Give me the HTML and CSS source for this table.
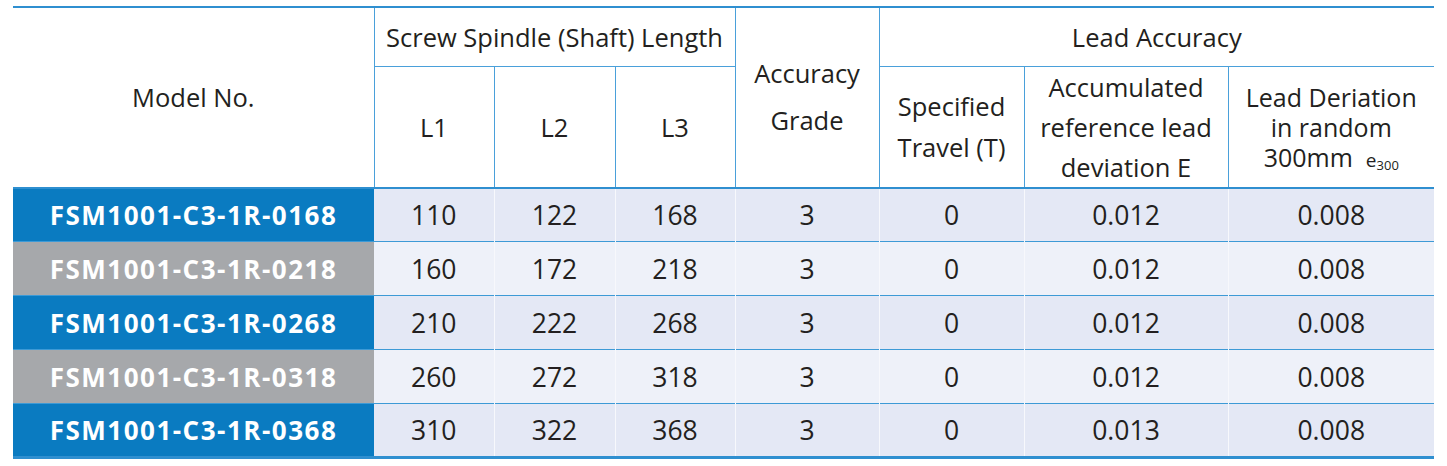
FILE: index.html
```html
<!DOCTYPE html>
<html>
<head>
<meta charset="utf-8">
<link rel="stylesheet" href="styles.css">
</head>
<body>
<table class="spec">
  <colgroup>
    <col class="c-model"><col class="c-l"><col class="c-l2"><col class="c-l">
    <col class="c-grade"><col class="c-travel"><col class="c-acc"><col class="c-dev">
  </colgroup>
  <thead>
    <tr class="h1">
      <th rowspan="2" class="first">Model No.</th>
      <th colspan="3">Screw Spindle (Shaft) Length</th>
      <th rowspan="2" class="grade">Accuracy<br>Grade</th>
      <th colspan="3">Lead Accuracy</th>
    </tr>
    <tr class="h2">
      <th>L1</th><th>L2</th><th>L3</th>
      <th class="travel">Specified<br>Travel (T)</th>
      <th class="acc">Accumulated<br>reference lead<br>deviation E</th>
      <th class="dev"><span class="ln">Lead Deriation</span><span class="ln">in random</span><span class="ln">300mm&nbsp; <span class="e">e<sub>300</sub></span></span></th>
    </tr>
  </thead>
  <tbody>
    <tr class="odd"><th class="blue">FSM1001-C3-1R-0168</th><td>110</td><td>122</td><td>168</td><td>3</td><td>0</td><td>0.012</td><td>0.008</td></tr>
    <tr class="even"><th class="grey">FSM1001-C3-1R-0218</th><td>160</td><td>172</td><td>218</td><td>3</td><td>0</td><td>0.012</td><td>0.008</td></tr>
    <tr class="odd"><th class="blue">FSM1001-C3-1R-0268</th><td>210</td><td>222</td><td>268</td><td>3</td><td>0</td><td>0.012</td><td>0.008</td></tr>
    <tr class="even"><th class="grey">FSM1001-C3-1R-0318</th><td>260</td><td>272</td><td>318</td><td>3</td><td>0</td><td>0.012</td><td>0.008</td></tr>
    <tr class="odd last"><th class="blue">FSM1001-C3-1R-0368</th><td>310</td><td>322</td><td>368</td><td>3</td><td>0</td><td>0.013</td><td>0.008</td></tr>
  </tbody>
</table>
</body>
</html>
```
FILE: styles.css
```css
html, body {
  margin: 0;
  padding: 0;
  background: #ffffff;
}
body {
  padding: 6px 0 0 13px;
  font-family: "Open Sans", "Liberation Sans", sans-serif;
  color: #231f20;
}
.spec {
  border-collapse: collapse;
  table-layout: fixed;
  width: 1421px;
  border-top: 2px solid #2f8fd0;
  border-bottom: 3px solid #2f8fd0;
}
.c-model { width: 361px; }
.c-l { width: 120px; }
.c-l2 { width: 121px; }
.c-grade { width: 144px; }
.c-travel { width: 145px; }
.c-acc { width: 204px; }
.c-dev { width: 206px; }

th, td {
  padding: 0;
  text-align: center;
  vertical-align: middle;
  font-weight: normal;
}
thead th {
  font-size: 25.5px;
  line-height: 30px;
  border-left: 1px solid #4aa0da;
  border-bottom: 1px solid #4aa0da;
  background: #fff;
  white-space: nowrap;
}
thead th.first { border-left: none; }
thead tr.h2 th { border-bottom: 2px solid #2f8fd0; }
thead th.first { border-bottom: 2px solid #2f8fd0; }
thead th.grade { border-bottom: 2px solid #2f8fd0; line-height: 47px; }
tr.h1 { height: 59px; }
tr.h2 { height: 116px; }
th.travel { line-height: 41px; }
th.acc { line-height: 40px; }
th.dev { line-height: 30px; font-size: 25px; }
th.dev .ln { display: block; height: 30px; line-height: 30px; }
.e { font-size: 19px; }
.e sub { font-size: 13px; vertical-align: -3px; line-height: 0; }

tbody tr { height: 54px; }
tbody tr + tr { border-top: 1px solid #3d9ad6; }
tbody td {
  font-size: 26.5px;
  border-left: 1px solid #f7f8fc;
}
tbody tr.odd td { background: #e4e8f5; }
tbody tr.even td { background: #eef1f9; }
tbody th {
  font-size: 26px;
  font-weight: bold;
  color: #ffffff;
  letter-spacing: 1.5px;
}
tbody th.blue { background: #0a7bc1; }
tbody th.grey { background: #a6a8ab; }
tbody td:nth-child(2) { border-left: none; }
```
